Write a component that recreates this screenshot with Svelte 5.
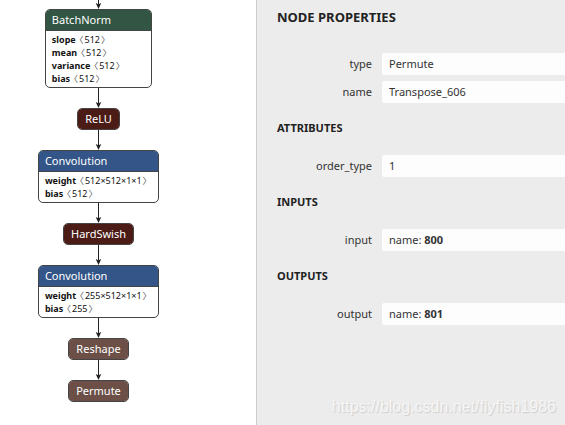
<script>
  const nodes = [
    {
      name: 'BatchNorm',
      kind: 'norm',
      params: [
        ['slope', '512'],
        ['mean', '512'],
        ['variance', '512'],
        ['bias', '512']
      ]
    },
    { name: 'ReLU', kind: 'activation' },
    { name: 'Convolution', kind: 'layer', params: [['weight', '512×512×1×1'], ['bias', '512']] },
    { name: 'HardSwish', kind: 'activation' },
    { name: 'Convolution', kind: 'layer', params: [['weight', '255×512×1×1'], ['bias', '255']] },
    { name: 'Reshape', kind: 'shape' },
    { name: 'Permute', kind: 'shape' }
  ];

  const sections = [
    { fields: [{ label: 'type', value: 'Permute' }, { label: 'name', value: 'Transpose_606' }] },
    { title: 'Attributes', fields: [{ label: 'order_type', value: '1' }] },
    { title: 'Inputs', fields: [{ label: 'input', ref: '800' }] },
    { title: 'Outputs', fields: [{ label: 'output', ref: '801' }] }
  ];
</script>

<div class="app">
  <main class="graph">
    {#each nodes as node, i}
      <svg class="edge" class:first={i === 0} viewBox="0 0 9 20" preserveAspectRatio="xMidYMax slice" aria-hidden="true">
        <path d="M4.5 0V17" stroke="#222" stroke-width="1" />
        <path d="M1.7 14L4.5 15.2L7.3 14L4.5 20Z" fill="#222" />
      </svg>
      <section class="node {node.kind}" class:plain={!node.params}>
        <h3>{node.name}</h3>
        {#if node.params}
          <ul>
            {#each node.params as [key, dims]}
              <li><b>{key}</b> <span class="angle">〈</span>{dims}<span class="angle">〉</span></li>
            {/each}
          </ul>
        {/if}
      </section>
    {/each}
  </main>

  <aside class="sidebar">
    <h1>NODE PROPERTIES</h1>
    {#each sections as section}
      <section>
        {#if section.title}<h2>{section.title}</h2>{/if}
        <div class="fields">
          {#each section.fields as field}
            <div class="field">
              <label for={field.label}>{field.label}</label>
              {#if field.ref}
                <output class="value" id={field.label}>name: <b>{field.ref}</b></output>
              {:else}
                <input class="value" id={field.label} type="text" readonly value={field.value} />
              {/if}
            </div>
          {/each}
        </div>
      </section>
    {/each}
    <span class="watermark">https://blog.csdn.net/flyfish1986</span>
  </aside>
</div>

<style>
  :global(body) {
    margin: 0;
    background: #fff;
  }

  .app {
    display: flex;
    min-height: 100vh;
    overflow: hidden;
    font-family: 'Noto Sans', 'Open Sans', sans-serif;
    font-size: 11px;
    color: #333;
  }

  .graph {
    flex: 0 0 256px;
    box-sizing: border-box;
    display: flex;
    flex-direction: column;
    align-items: center;
    padding-right: 59px;
  }

  .edge {
    display: block;
    flex: none;
    width: 9px;
    height: 20px;
  }

  .edge.first {
    height: 9px;
  }

  .node {
    border: 1px solid #444;
    border-radius: 5px;
    overflow: hidden;
    background: #fff;
  }

  h3 {
    margin: 0;
    padding: 0 6px;
    font-size: 11px;
    font-weight: 400;
    line-height: 20px;
    color: #fff;
  }

  .plain h3 {
    padding: 0 7px;
  }

  .norm h3 {
    background: #335544;
  }

  .layer h3 {
    background: #335588;
  }

  .activation h3 {
    background: #4b1b16;
  }

  .shape h3 {
    background: #6c4f47;
  }

  ul {
    margin: 0;
    padding: 2px 10px 2px 6px;
    border-top: 1px solid #444;
    list-style: none;
    font-size: 9px;
    line-height: 13px;
    color: #111;
    white-space: nowrap;
  }

  .norm ul {
    padding-right: 30px;
  }

  .angle {
    margin: 0 1px;
    font-family: 'Noto Sans CJK SC', sans-serif;
    font-feature-settings: 'halt';
    font-size: 9px;
    line-height: 0;
    color: #555;
  }

  .sidebar {
    position: relative;
    flex: 1;
    min-width: 0;
    padding-left: 20px;
    border-left: 1px solid #ccc;
    background: #ececec;
  }

  h1,
  h2 {
    margin: 0;
    font-weight: 700;
    text-transform: uppercase;
    color: #222;
  }

  h1 {
    margin-bottom: 19px;
    font-size: 13px;
    line-height: 34px;
  }

  h2 {
    padding-bottom: 2px;
    font-size: 11px;
    line-height: 50px;
  }

  .fields {
    display: flex;
    flex-direction: column;
    gap: 6px;
  }

  .field {
    display: flex;
    gap: 10px;
    line-height: 22px;
  }

  label {
    flex: 0 0 95px;
    text-align: right;
  }

  .value {
    flex: 1;
    min-width: 0;
    box-sizing: border-box;
    height: 22px;
    padding: 0 7px;
    border: 0;
    border-radius: 2px 0 0 2px;
    outline: 0;
    background: #fdfdfd;
    font: inherit;
    line-height: 22px;
    color: inherit;
  }

  .watermark {
    position: absolute;
    right: 9px;
    bottom: 9px;
    font-family: 'Liberation Sans', sans-serif;
    font-size: 16px;
    line-height: 18px;
    color: #f6f6f6;
    text-shadow: 1px 1px 1px #ccc;
  }
</style>
